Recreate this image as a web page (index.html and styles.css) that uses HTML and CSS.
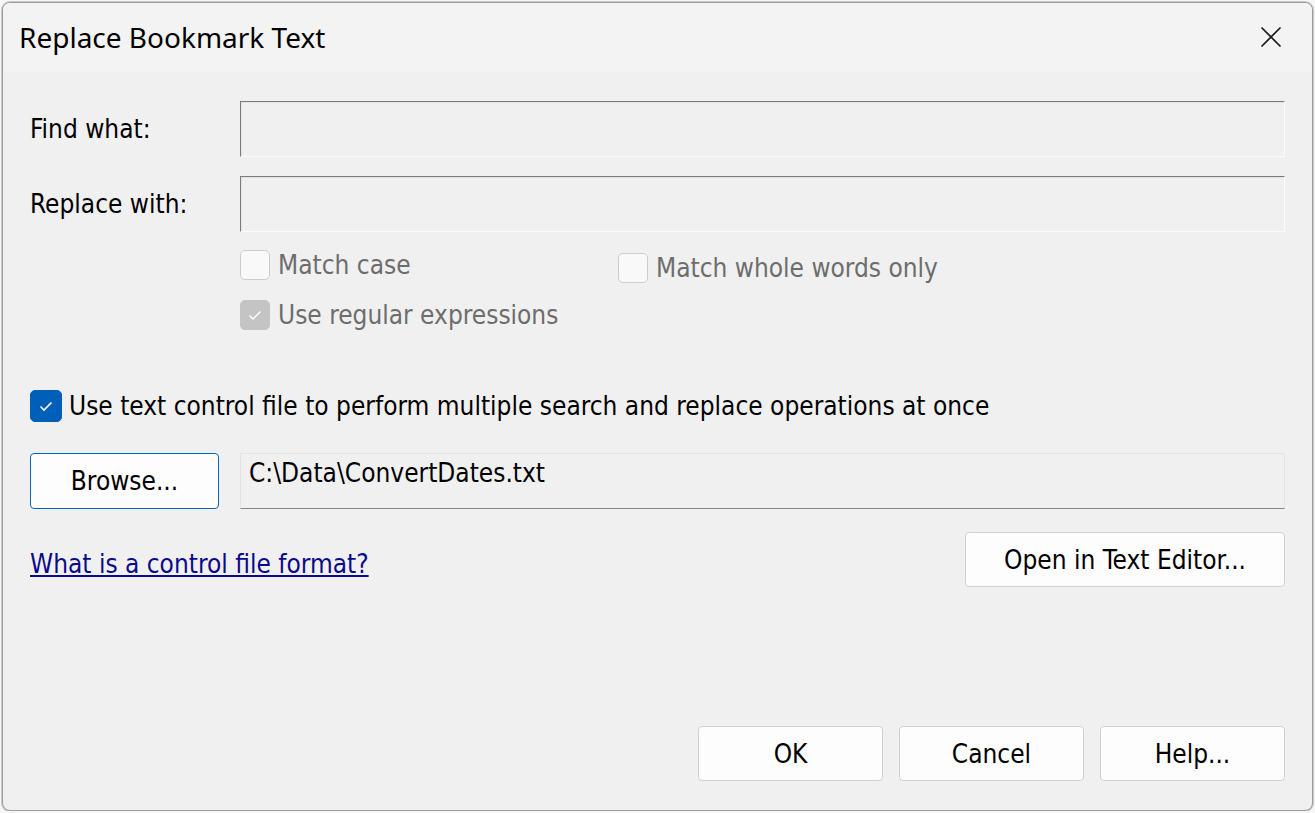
FILE: index.html
```html
<!DOCTYPE html>
<html lang="en">
<head>
    <meta charset="UTF-8">
    <title>Replace Bookmark Text</title>
    <link rel="stylesheet" href="styles.css">
</head>
<body>
    <div class="dialog">
        <div class="titlebar">
            <span class="title">Replace Bookmark Text</span>
            <span class="close">
                <svg width="22" height="22" viewBox="0 0 22 22">
                    <path d="M1.5 1.5 L20.5 20.5 M20.5 1.5 L1.5 20.5" stroke="#1b1b1b" stroke-width="1.7" fill="none"/>
                </svg>
            </span>
        </div>

        <div class="content">
            <div class="field-row">
                <label class="label">Find what:</label>
                <div class="edit"></div>
            </div>
            <div class="field-row second">
                <label class="label">Replace with:</label>
                <div class="edit"></div>
            </div>

            <div class="options">
                <div class="opt-col">
                    <div class="check disabled">
                        <span class="box"></span>
                        <span>Match case</span>
                    </div>
                    <div class="check disabled checked gap">
                        <span class="box">
                            <svg width="30" height="30" viewBox="0 0 30 30"><path d="M9.5 15.5 L13 19 L20.5 11.5" stroke="#fff" stroke-width="1.4" fill="none"/></svg>
                        </span>
                        <span>Use regular expressions</span>
                    </div>
                </div>
                <div class="opt-col right">
                    <div class="check disabled">
                        <span class="box"></span>
                        <span>Match whole words only</span>
                    </div>
                </div>
            </div>

            <div class="check primary">
                <span class="box">
                    <svg width="30" height="30" viewBox="0 0 30 30"><path d="M9.5 15.5 L13 19 L20.5 11.5" stroke="#fff" stroke-width="1.6" fill="none"/></svg>
                </span>
                <span>Use text control file to perform multiple search and replace operations at once</span>
            </div>

            <div class="browse-row">
                <button class="btn default">Browse...</button>
                <div class="path">C:\Data\ConvertDates.txt</div>
            </div>

            <div class="link-row">
                <a class="link" href="#">What is a control file format?</a>
                <button class="btn editor">Open in Text Editor...</button>
            </div>

            <div class="footer">
                <button class="btn">OK</button>
                <button class="btn">Cancel</button>
                <button class="btn">Help...</button>
            </div>
        </div>
    </div>
</body>
</html>
```

FILE: styles.css
```css
body {
    margin: 0;
    padding: 2px 0 0 2px;
    background-color: #f6f6f6;
    font-family: "DejaVu Sans Condensed", "DejaVu Sans", sans-serif;
    font-stretch: condensed;
    font-size: 26px;
    color: #000;
    overflow: hidden;
}

.dialog {
    width: 1309px;
    height: 807px;
    background-color: #f0f0f0;
    border: 1px solid #9c9c9c;
    border-radius: 8px;
    box-shadow: 0 0 0 1px #c8c8c8;
    display: flex;
    flex-direction: column;
    overflow: hidden;
}

.titlebar {
    height: 69px;
    flex-shrink: 0;
    background-color: #f3f3f3;
    display: flex;
    align-items: center;
    justify-content: space-between;
    padding: 0 30px 0 16px;
}

.title {
    font-family: "Noto Sans", "Open Sans", sans-serif;
    font-stretch: normal;
    font-size: 28px;
    margin-top: -2px;
}

.close {
    display: flex;
    margin-top: -1px;
}

.content {
    flex: 1;
    display: flex;
    flex-direction: column;
    padding: 29px 27px 29px 27px;
}

.field-row {
    display: flex;
    align-items: center;
}

.field-row.second {
    margin-top: 19px;
}

.label {
    width: 210px;
    flex-shrink: 0;
}

.edit {
    flex: 1;
    height: 54px;
    border-style: solid;
    border-width: 1px;
    border-color: #7c7c7c #fbfbfb #fbfbfb #7c7c7c;
    box-shadow: inset 1px 1px 0 #e2e2e2;
}

.options {
    display: grid;
    grid-template-columns: 378px auto;
    padding-left: 210px;
    margin-top: 18px;
}

.opt-col.right {
    padding-top: 3px;
}

.check {
    display: flex;
    align-items: center;
    gap: 8px;
    height: 30px;
}

.check.gap {
    margin-top: 20px;
}

.check .box {
    width: 30px;
    height: 30px;
    box-sizing: border-box;
    border-radius: 5px;
    display: flex;
    flex-shrink: 0;
}

.check.disabled {
    color: #6d6d6d;
}

.check.disabled .box {
    background-color: #f9f9f9;
    border: 1px solid #cccccc;
}

.check.disabled.checked .box {
    background-color: #c4c4c4;
    border-color: #c4c4c4;
}

.check .box svg {
    margin: -1px;
}

.check.primary {
    margin-top: 60px;
    gap: 7px;
    height: 32px;
}

.check.primary .box {
    width: 32px;
    height: 32px;
    background-color: #005fb8;
    border: 1px solid #005fb8;
}

.check.primary .box svg {
    margin: 0;
}

.browse-row {
    display: flex;
    margin-top: 31px;
    gap: 21px;
}

.btn {
    font-family: inherit;
    font-stretch: condensed;
    font-size: 26px;
    color: #000;
    background-color: #fdfdfd;
    border: 1px solid #d0d0d0;
    border-radius: 4px;
    height: 55px;
    padding: 0;
}

.btn.default {
    width: 189px;
    height: 56px;
    border-color: #0067c0;
}

.path {
    flex: 1;
    height: 56px;
    box-sizing: border-box;
    border: 1px solid #e3e3e3;
    border-bottom-color: #858585;
    padding: 4px 0 0 8px;
}

.link-row {
    display: flex;
    justify-content: space-between;
    align-items: flex-start;
    margin-top: 23px;
}

.link {
    color: #0a0a8c;
    text-decoration: underline;
    margin-top: 17px;
}

.btn.editor {
    width: 320px;
    height: 55px;
}

.footer {
    margin-top: auto;
    display: flex;
    justify-content: flex-end;
    gap: 16px;
}

.footer .btn {
    width: 185px;
}
```
